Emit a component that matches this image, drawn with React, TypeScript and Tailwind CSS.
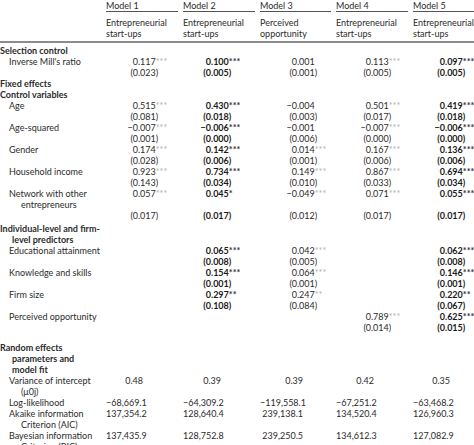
import type { ReactNode } from 'react';

type Row =
  | { kind: 'head'; lines: string[]; gap?: string }
  | { kind: 'var'; lines: string[]; vals: string[]; se?: string[]; gap?: string }
  | { kind: 'fit'; lines: string[]; vals: string[]; gap?: string };

const GRID = 'grid grid-cols-[106px_77px_77px_76px_77px_77px]';
const BOLD = [false, true, false, false, true];
const DEC = ['w-[32px]', 'w-[28px]', 'w-[37px]', 'w-[35px]', 'w-[32px]'];
const RIGHT = ['w-[37px]', 'w-[38px]', 'w-[43px]', 'w-[38px]', 'w-[37px]'];

const rows: Row[] = [
  { kind: 'head', lines: ['Selection control'] },
  {
    kind: 'var',
    lines: ["Inverse Mill's ratio"],
    vals: ['0.117***', '0.100***', '0.001', '0.113***', '0.097***'],
    se: ['(0.023)', '(0.005)', '(0.001)', '(0.005)', '(0.005)'],
  },
  { kind: 'head', lines: ['Fixed effects'] },
  { kind: 'head', lines: ['Control variables'] },
  {
    kind: 'var',
    lines: ['Age'],
    vals: ['0.515***', '0.430***', '−0.004', '0.501***', '0.419***'],
    se: ['(0.081)', '(0.018)', '(0.003)', '(0.017)', '(0.018)'],
  },
  {
    kind: 'var',
    lines: ['Age-squared'],
    vals: ['−0.007***', '−0.006***', '−0.001', '−0.007***', '−0.006***'],
    se: ['(0.001)', '(0.000)', '(0.006)', '(0.000)', '(0.000)'],
  },
  {
    kind: 'var',
    lines: ['Gender'],
    vals: ['0.174***', '0.142***', '0.014***', '0.167***', '0.136***'],
    se: ['(0.028)', '(0.006)', '(0.001)', '(0.006)', '(0.006)'],
  },
  {
    kind: 'var',
    lines: ['Household income'],
    vals: ['0.923***', '0.734***', '0.149***', '0.867***', '0.694***'],
    se: ['(0.143)', '(0.034)', '(0.010)', '(0.033)', '(0.034)'],
  },
  {
    kind: 'var',
    lines: ['Network with other', 'entrepreneurs'],
    vals: ['0.057***', '0.045*', '−0.049***', '0.071***', '0.055***'],
    se: ['(0.017)', '(0.017)', '(0.012)', '(0.017)', '(0.017)'],
  },
  { kind: 'head', lines: ['Individual-level and firm-', 'level predictors'], gap: 'mt-[2px]' },
  {
    kind: 'var',
    lines: ['Educational attainment'],
    vals: ['', '0.065***', '0.042***', '', '0.062***'],
    se: ['', '(0.008)', '(0.005)', '', '(0.008)'],
  },
  {
    kind: 'var',
    lines: ['Knowledge and skills'],
    vals: ['', '0.154***', '0.064***', '', '0.146***'],
    se: ['', '(0.001)', '(0.001)', '', '(0.001)'],
  },
  {
    kind: 'var',
    lines: ['Firm size'],
    vals: ['', '0.297**', '0.247**', '', '0.220**'],
    se: ['', '(0.108)', '(0.084)', '', '(0.067)'],
  },
  {
    kind: 'var',
    lines: ['Perceived opportunity'],
    vals: ['', '', '', '0.789***', '0.625***'],
    se: ['', '', '', '(0.014)', '(0.015)'],
  },
  { kind: 'head', lines: ['Random effects', 'parameters and', 'model fit'], gap: 'mt-[9px]' },
  { kind: 'fit', lines: ['Variance of intercept', '(μ0j)'], vals: ['0.48', '0.39', '0.39', '0.42', '0.35'] },
  { kind: 'fit', lines: ['Log-likelihood'], vals: ['−68,669.1', '−64,309.2', '−119,558.1', '−67,251.2', '−63,468.2'] },
  {
    kind: 'fit',
    lines: ['Akaike information', 'Criterion (AIC)'],
    vals: ['137,354.2', '128,640.4', '239,138.1', '134,520.4', '126,960.3'],
  },
  {
    kind: 'fit',
    lines: ['Bayesian information', 'Criterion (BIC)'],
    vals: ['137,435.9', '128,752.8', '239,250.5', '134,612.3', '127,082.9'],
  },
];

function Label({ lines, head }: { lines: string[]; head?: boolean }) {
  return (
    <div className={head ? 'font-bold' : 'pl-[9px]'}>
      {lines.map((l, i) => (
        <div key={i} className={i > 0 ? 'pl-[12px]' : ''}>
          {l}
        </div>
      ))}
    </div>
  );
}

// decimal-aligned coefficient; stars greyed unless the column is bold
function Coef({ v, col }: { v: string; col: number }) {
  if (!v) return <div />;
  const m = v.match(/^([^.]*)(\.[0-9]+\)?)(\**)$/);
  const int = m ? m[1] : v;
  const frac = m ? m[2] : '';
  const stars = m ? m[3] : '';
  const bold = BOLD[col];
  return (
    <div className={`flex ${bold ? 'font-bold text-[#1a1a1a]' : ''}`}>
      <span className={`${DEC[col]} text-right shrink-0`}>{int}</span>
      <span>{frac}</span>
      {stars && <span className={bold ? 'text-[#333]' : 'text-[#b0b0b0]'}>{stars}</span>}
    </div>
  );
}

function Fit({ v, col }: { v: string; col: number }) {
  return (
    <div className="flex">
      <span className={`${RIGHT[col]} text-right shrink-0 whitespace-nowrap`}>{v}</span>
    </div>
  );
}

function Line({ children, gap }: { children: ReactNode; gap?: string }) {
  return <div className={`${GRID} ${gap ?? ''}`}>{children}</div>;
}

export default function App() {
  const heads = [
    ['Model 1', 'Entrepreneurial', 'start-ups'],
    ['Model 2', 'Entrepreneurial', 'start-ups'],
    ['Model 3', 'Perceived', 'opportunity'],
    ['Model 4', 'Entrepreneurial', 'start-ups'],
    ['Model 5', 'Entrepreneurial', 'start-ups'],
  ];
  return (
    <div
      className="w-[474px] h-[445px] overflow-hidden bg-white text-[#2b2b2b] text-[9px] leading-[11px] whitespace-nowrap"
      style={{ fontFamily: 'Lato, "Liberation Sans", sans-serif' }}
    >
      <div className={`${GRID} border-b-2 border-[#8c8c8c] pb-[2px]`}>
        <div />
        {heads.map(([m, a, b]) => (
          <div key={m} className="pr-[5px]">
            <div className="border-b border-[#555] h-[12px]">{m}</div>
            <div className="pt-[5px]">{a}</div>
            <div>{b}</div>
          </div>
        ))}
      </div>
      <div className="pt-[2px]">
        {rows.map((r, i) => {
          if (r.kind === 'head')
            return (
              <Line key={i} gap={r.gap}>
                <Label lines={r.lines} head />
              </Line>
            );
          if (r.kind === 'fit')
            return (
              <Line key={i} gap={r.gap}>
                <Label lines={r.lines} />
                {r.vals.map((v, c) => (
                  <Fit key={c} v={v} col={c} />
                ))}
              </Line>
            );
          return (
            <div key={i} className={r.gap}>
              <Line>
                <Label lines={r.lines} />
                {r.vals.map((v, c) => (
                  <Coef key={c} v={v} col={c} />
                ))}
              </Line>
              {r.se && (
                <Line>
                  <div />
                  {r.se.map((v, c) => (
                    <Coef key={c} v={v} col={c} />
                  ))}
                </Line>
              )}
            </div>
          );
        })}
      </div>
    </div>
  );
}
